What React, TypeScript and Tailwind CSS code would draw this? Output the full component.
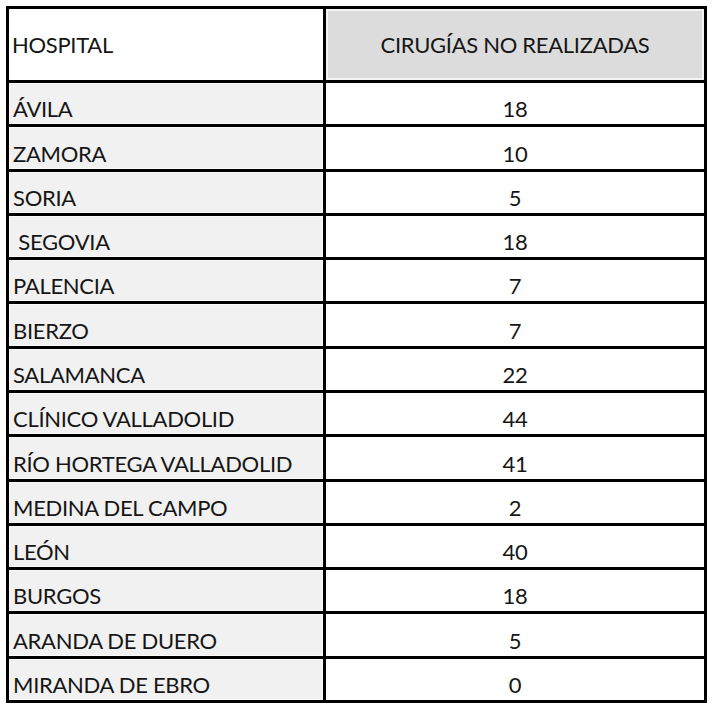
import React from "react";

interface Row {
  hospital: string;
  count: number;
}

const rows: Row[] = [
  { hospital: "ÁVILA", count: 18 },
  { hospital: "ZAMORA", count: 10 },
  { hospital: "SORIA", count: 5 },
  { hospital: "\u00a0SEGOVIA", count: 18 },
  { hospital: "PALENCIA", count: 7 },
  { hospital: "BIERZO", count: 7 },
  { hospital: "SALAMANCA", count: 22 },
  { hospital: "CLÍNICO VALLADOLID", count: 44 },
  { hospital: "RÍO HORTEGA VALLADOLID", count: 41 },
  { hospital: "MEDINA DEL CAMPO", count: 2 },
  { hospital: "LEÓN", count: 40 },
  { hospital: "BURGOS", count: 18 },
  { hospital: "ARANDA DE DUERO", count: 5 },
  { hospital: "MIRANDA DE EBRO", count: 0 },
];

const App: React.FC = () => (
  <div className="w-[714px] h-[706px] bg-white pt-[6px] pl-[6px] font-['Lato',sans-serif] text-[22px] tracking-[-0.3px] leading-none text-[#161616]">
    <div className="w-[701px] h-[697px] border-[3px] border-black flex flex-col">
      <div className="h-[71px] flex shrink-0">
        <div className="w-[314px] flex items-center pl-[3px] bg-white">
          HOSPITAL
        </div>
        <div className="flex-1 flex border-l-[3px] border-black">
          <div className="w-full h-full flex items-center justify-center bg-[#dcdcdc] border-2 border-[#f3f3f3]">
            CIRUGÍAS NO REALIZADAS
          </div>
        </div>
      </div>
      {rows.map((row) => (
        <div key={row.hospital} className="flex-1 flex border-t-[3px] border-black">
          <div className="w-[314px] flex items-end pl-[3px] pb-[3px] bg-[#f1f1f1] border border-[#fafafa] whitespace-pre">
            {row.hospital}
          </div>
          <div className="flex-1 flex items-end justify-center pb-[4px] border-l-[3px] border-black bg-white">
            {row.count}
          </div>
        </div>
      ))}
    </div>
  </div>
);

export default App;
